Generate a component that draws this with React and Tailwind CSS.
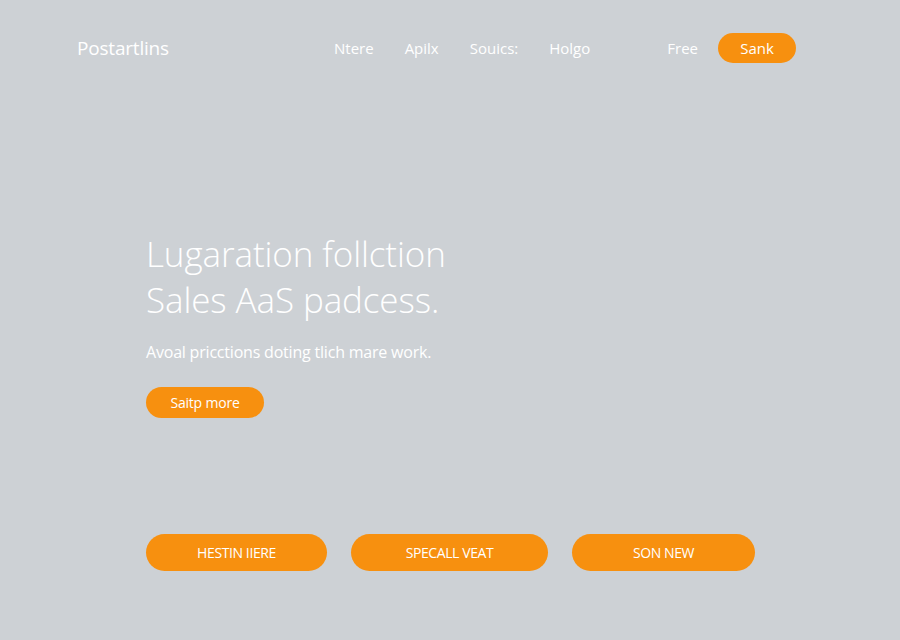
import React from "react";

const App = () => {
  return (
    <div className="w-[900px] h-[640px] bg-[#cdd1d5] text-white font-['Open_Sans',sans-serif] overflow-hidden">
      <header className="flex items-center h-[96px] pl-[77px] pr-[104px]">
        <span className="text-[19px] font-medium w-[257px] tracking-[-0.2px]">Postartlins</span>
        <nav className="flex items-center gap-[31px] text-[15px]">
          <a href="#">Ntere</a>
          <a href="#">Apilx</a>
          <a href="#">Souics:</a>
          <a href="#">Holgo</a>
        </nav>
        <div className="ml-auto flex items-center gap-[20px] text-[15px]">
          <a href="#">Free</a>
          <button className="w-[78px] h-[30px] rounded-full bg-[#f7900f] text-[15px]">Sank</button>
        </div>
      </header>

      <section className="pl-[146px] pt-[135px]">
        <h1 className="text-[35px] font-light leading-[46px] tracking-[-0.1px]">
          Lugaration follction
          <br />
          Sales AaS padcess.
        </h1>
        <p className="mt-[17px] text-[16px] tracking-[-0.2px]">Avoal pricctions doting tlich mare work.</p>
        <button className="mt-[23px] w-[118px] h-[31px] rounded-full bg-[#f7900f] text-[14px] tracking-[-0.2px]">Saitp more</button>
      </section>

      <div className="flex gap-[24px] pl-[146px] mt-[116px]">
        <button className="w-[181px] h-[37px] rounded-full bg-[#f7900f] text-[14px] uppercase tracking-[-0.4px]">Hestin IIere</button>
        <button className="w-[197px] h-[37px] rounded-full bg-[#f7900f] text-[14px] uppercase tracking-[-0.4px]">Specall Veat</button>
        <button className="w-[183px] h-[37px] rounded-full bg-[#f7900f] text-[14px] uppercase tracking-[-0.4px]">Son New</button>
      </div>
    </div>
  );
};

export default App;
